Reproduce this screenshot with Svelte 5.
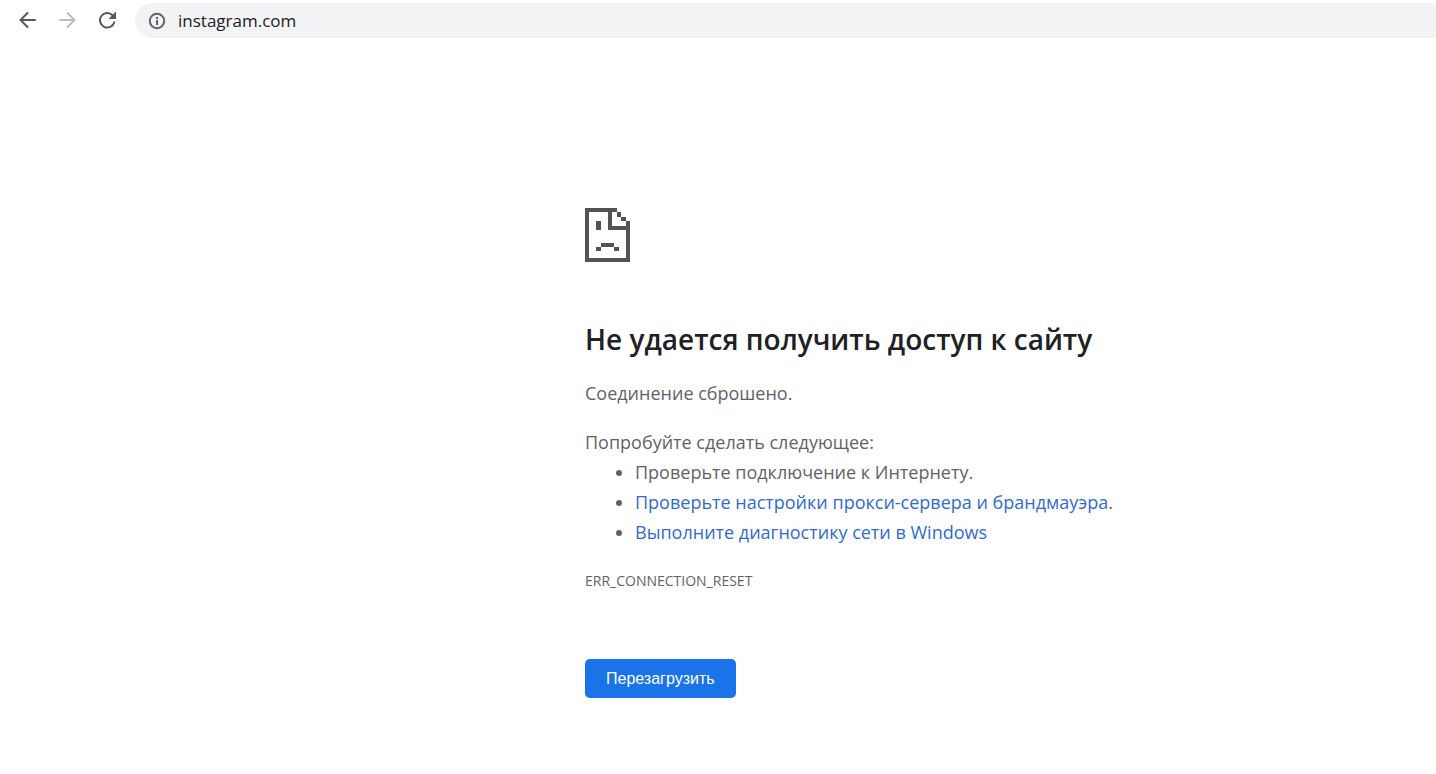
<script lang="ts">
  type Tip = {
    text: string
    href?: string
    suffix?: string
  }

  const tips: Tip[] = [
    { text: "Проверьте подключение к Интернету." },
    { text: "Проверьте настройки прокси-сервера и брандмауэра", href: "#proxy", suffix: "." },
    { text: "Выполните диагностику сети в Windows", href: "#diagnose" },
  ]

  let address = $state("instagram.com")
</script>

<header class="toolbar">
  <button class="nav" aria-label="Назад">
    <svg viewBox="0 0 24 24" width="24" height="24">
      <path class="arrow" d="M20 12H5.5M12.5 5l-7 7 7 7" />
    </svg>
  </button>
  <button class="nav" aria-label="Вперёд" disabled>
    <svg viewBox="0 0 24 24" width="24" height="24">
      <path class="arrow" d="M5 12h14M12.500 5l7 7-7 7" />
    </svg>
  </button>
  <button class="nav" aria-label="Обновить">
    <svg viewBox="0 0 24 24" width="24" height="24">
      <path class="arrow" d="M17.5 7.2A7.3 7.3 0 1 0 19.3 14.2" />
      <path d="M21 3.5V11h-7.5z" />
    </svg>
  </button>
  <div class="omnibox">
    <svg class="info" viewBox="0 0 18 18" width="18" height="18" aria-hidden="true">
      <circle cx="9" cy="9" r="7.2" />
      <path d="M8 8h2v5H8zM8 5h2v2H8z" />
    </svg>
    <input type="text" aria-label="Адресная строка" spellcheck="false" bind:value={address} />
  </div>
</header>

<main class="error-page">
  <svg class="sad-page" viewBox="0 0 45 54" width="45" height="54" aria-hidden="true">
    <path d="M0 0h32v4H4v46h37V22H23V4h4v14h14v-5h4v41H0z" />
    <path d="M32 4h4v5h-4zM36 9h5v4h-5zM11 13h5v9h-5zM16 35h13v4H16zM11 39h5v4h-5zM29 39h5v4h-5z" />
  </svg>

  <h1>Не удается получить доступ к сайту</h1>
  <p>Соединение сброшено.</p>

  <p class="lead">Попробуйте сделать следующее:</p>
  <ul>
    {#each tips as tip}
      <li>{#if tip.href}<a href={tip.href}>{tip.text}</a>{tip.suffix ?? ""}{:else}{tip.text}{/if}</li>
    {/each}
  </ul>

  <p class="code">ERR_CONNECTION_RESET</p>
  <button class="reload">Перезагрузить</button>
</main>

<style>
  :global(body) {
    margin: 0;
    background: #fff;
    color: #5f6368;
    font-family: "Segoe UI", "Open Sans", "Noto Sans", sans-serif;
    font-size: 18px;
    line-height: 30px;
  }

  .toolbar {
    display: flex;
    align-items: flex-start;
    gap: 4px;
    padding: 3px 0 3px 9px;
  }

  .nav {
    display: grid;
    place-items: center;
    width: 36px;
    height: 34px;
    padding: 0;
    border: none;
    border-radius: 50%;
    background: transparent;
    color: #54585d;
    fill: currentColor;
  }

  .nav:disabled {
    color: #babcbe;
  }

  .arrow {
    fill: none;
    stroke: currentColor;
    stroke-width: 2;
    stroke-linecap: round;
  }

  .omnibox {
    flex: 1;
    display: flex;
    align-items: center;
    gap: 12px;
    height: 35px;
    margin-left: 6px;
    padding-left: 13px;
    border-radius: 18px 0 0 18px;
    background: #f1f3f4;
  }

  .info {
    fill: #5f6368;
  }

  .info circle {
    fill: none;
    stroke: #5f6368;
    stroke-width: 2;
  }

  .omnibox input {
    flex: 1;
    min-width: 0;
    padding: 0;
    border: none;
    outline: none;
    background: transparent;
    color: #202124;
    font-family: inherit;
    font-size: 17px;
  }

  .error-page {
    max-width: 750px;
    margin-left: 585px;
    padding: 167px 24px 40px 0;
  }

  .sad-page {
    display: block;
    fill: #535353;
  }

  h1 {
    margin: 59px 0 21px;
    color: #202124;
    font-size: 28px;
    font-weight: 600;
    line-height: 36px;
  }

  p {
    margin: 0;
  }

  .lead {
    margin-top: 19px;
  }

  ul {
    margin: 0;
    padding-left: 50px;
  }

  a {
    color: #2f6bd0;
    text-decoration: none;
  }

  .code {
    margin-top: 19px;
    font-size: 14px;
  }

  .reload {
    margin-top: 63px;
    padding: 0 21px;
    border: none;
    border-radius: 5px;
    background: #1a73e8;
    color: #fff;
    font-family: "Liberation Sans", Arial, sans-serif;
    font-size: 16px;
    line-height: 39px;
    cursor: pointer;
  }
</style>
